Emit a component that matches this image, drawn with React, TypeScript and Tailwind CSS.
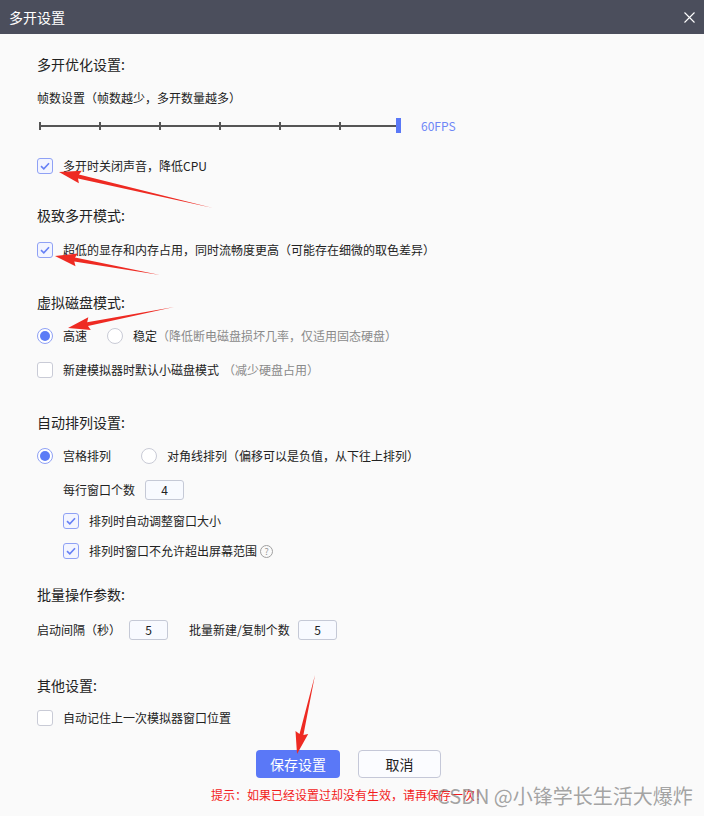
import React from 'react';

const font = "font-['Noto_Sans_CJK_SC','Microsoft_YaHei',sans-serif]";

const Checkbox = ({ checked }: { checked: boolean }) =>
  checked ? (
    <span className="flex h-4 w-4 shrink-0 items-center justify-center rounded-[3px] border border-[#8fa1f5] bg-[#f3f5ff]">
      <svg width="10" height="8" viewBox="0 0 10 8">
        <path d="M1 4.2 L3.8 6.8 L9 1.2" fill="none" stroke="#6680f5" strokeWidth="1.6" />
      </svg>
    </span>
  ) : (
    <span className="block h-4 w-4 shrink-0 rounded-[3px] border border-[#c9cbd6] bg-white" />
  );

const Radio = ({ checked }: { checked: boolean }) =>
  checked ? (
    <span className="flex h-4 w-4 shrink-0 items-center justify-center rounded-full border border-[#8fa1f5] bg-white">
      <span className="block h-[10px] w-[10px] rounded-full bg-[#5c7cf6]" />
    </span>
  ) : (
    <span className="block h-4 w-4 shrink-0 rounded-full border border-[#c9cbd6] bg-white" />
  );

const NumBox = ({ value }: { value: string }) => (
  <span className="flex h-5 w-[39px] shrink-0 items-center justify-center rounded-[3px] border border-[#c5c9d6] bg-[#f8faff] text-xs text-[#222]">
    {value}
  </span>
);

const Header = ({ text, className }: { text: string; className: string }) => (
  <div className={`flex h-5 items-center text-sm text-[#222] ${className}`}>{text}</div>
);

// tapered annotation arrow, tail -> head
const arrow = (tx: number, ty: number, hx: number, hy: number) => {
  const len = Math.hypot(hx - tx, hy - ty);
  const dx = (hx - tx) / len;
  const dy = (hy - ty) / len;
  const px = -dy;
  const py = dx;
  const headLen = 20;
  const bx = hx - dx * headLen;
  const by = hy - dy * headLen;
  const pts = [
    [tx, ty],
    [bx + px * 2, by + py * 2],
    [bx - dx * 2 + px * 6.5, by - dy * 2 + py * 6.5],
    [hx, hy],
    [bx - dx * 2 - px * 6.5, by - dy * 2 - py * 6.5],
    [bx - px * 2, by - py * 2],
  ];
  return pts.map((p) => `${p[0].toFixed(1)},${p[1].toFixed(1)}`).join(' ');
};

const ticks = [0, 60, 120, 180, 240, 300];

export default function App() {
  return (
    <div className={`relative h-[816px] w-[704px] overflow-hidden bg-[#fafafa] ${font}`}>
      {/* title bar */}
      <div className="flex h-[34px] items-center justify-between bg-[#4b4e5c] pl-[9px] pr-[9px]">
        <span className="text-sm text-white">多开设置</span>
        <svg width="11" height="11" viewBox="0 0 11 11">
          <path d="M0.5 0.5 L10.5 10.5 M10.5 0.5 L0.5 10.5" stroke="#fff" strokeWidth="1.1" />
        </svg>
      </div>

      <div className="pl-[37px] text-xs text-[#222]">
        <Header text="多开优化设置:" className="mt-[20px]" />
        <div className="mt-[14px] flex h-5 items-center">帧数设置（帧数越少，多开数量越多）</div>

        {/* slider */}
        <div className="mt-[8px] flex h-5 items-center">
          <div className="relative h-5 w-[364px]">
            <div className="absolute left-[2px] right-[4px] top-[9px] h-[1.5px] bg-[#555]" />
            {ticks.map((t) => (
              <div key={t} className="absolute top-[6px] h-[8px] w-[1.5px] bg-[#555]" style={{ left: 2 + t }} />
            ))}
            <div className="absolute right-0 top-[2px] h-[15px] w-[5px] bg-[#5a78f7]" />
          </div>
          <span className="ml-[20px] text-xs text-[#6e87f7]">60FPS</span>
        </div>

        <div className="mt-[20px] flex h-5 items-center gap-[10px]">
          <Checkbox checked />
          <span>多开时关闭声音，降低CPU</span>
        </div>

        <Header text="极致多开模式:" className="mt-[29px]" />
        <div className="mt-[15px] flex h-5 items-center gap-[10px]">
          <Checkbox checked />
          <span>超低的显存和内存占用，同时流畅度更高（可能存在细微的取色差异）</span>
        </div>

        <Header text="虚拟磁盘模式:" className="mt-[32px]" />
        <div className="mt-[14px] flex h-5 items-center">
          <Radio checked />
          <span className="ml-[10px]">高速</span>
          <span className="ml-[20px] flex">
            <Radio checked={false} />
          </span>
          <span className="ml-[10px]">稳定</span>
          <span className="text-[#8a8a8a]">（降低断电磁盘损坏几率，仅适用固态硬盘）</span>
        </div>
        <div className="mt-[14px] flex h-5 items-center">
          <Checkbox checked={false} />
          <span className="ml-[10px]">新建模拟器时默认小磁盘模式</span>
          <span className="ml-[4px] text-[#8a8a8a]">（减少硬盘占用）</span>
        </div>

        <Header text="自动排列设置:" className="mt-[32px]" />
        <div className="mt-[14px] flex h-5 items-center">
          <Radio checked />
          <span className="ml-[10px]">宫格排列</span>
          <span className="ml-[30px] flex">
            <Radio checked={false} />
          </span>
          <span className="ml-[10px]">对角线排列（偏移可以是负值，从下往上排列）</span>
        </div>
        <div className="pl-[26px]">
          <div className="mt-[14px] flex h-5 items-center">
            <span className="w-[82px]">每行窗口个数</span>
            <NumBox value="4" />
          </div>
          <div className="mt-[11px] flex h-5 items-center gap-[10px]">
            <Checkbox checked />
            <span>排列时自动调整窗口大小</span>
          </div>
          <div className="mt-[10px] flex h-5 items-center gap-[10px]">
            <Checkbox checked />
            <span className="flex items-center">
              排列时窗口不允许超出屏幕范围
              <span className="ml-[3px] flex h-[13px] w-[13px] items-center justify-center rounded-full border border-[#a0a0a0] text-[9px] leading-none text-[#999]">
                ?
              </span>
            </span>
          </div>
        </div>

        <Header text="批量操作参数:" className="mt-[23px]" />
        <div className="mt-[16px] flex h-5 items-center">
          <span className="w-[92px]">启动间隔（秒）</span>
          <NumBox value="5" />
          <span className="ml-[21px] w-[109px]">批量新建/复制个数</span>
          <NumBox value="5" />
        </div>

        <Header text="其他设置:" className="mt-[35px]" />
        <div className="mt-[13px] flex h-5 items-center gap-[10px]">
          <Checkbox checked={false} />
          <span>自动记住上一次模拟器窗口位置</span>
        </div>
      </div>

      {/* buttons */}
      <div className="mt-[22px] flex gap-[18px] pl-[256px]">
        <button className="h-[28px] w-[84px] rounded-[4px] bg-[#5a78f7] text-sm text-white">保存设置</button>
        <button className="h-[28px] w-[83px] rounded-[4px] border border-[#c5c8d8] bg-[#fbfcff] text-sm text-[#222]">
          取消
        </button>
      </div>
      <div className="mt-[9px] flex h-4 items-center pl-[211px] text-xs text-[#f21c1c]">
        提示：如果已经设置过却没有生效，请再保存一次！
      </div>

      {/* watermark */}
      <div className="absolute left-[437px] top-[784px] text-[20px] leading-6 text-[#8c8c8c]/80">
        CSDN @小锋学长生活大爆炸
      </div>

      {/* annotation arrows */}
      <svg className="pointer-events-none absolute inset-0" width="704" height="816" viewBox="0 0 704 816">
        <polygon points={arrow(213, 208, 59, 172)} fill="#ee2a22" />
        <polygon points={arrow(160, 275, 55, 256)} fill="#ee2a22" />
        <polygon points={arrow(174, 307, 68, 328)} fill="#ee2a22" />
        <polygon points={arrow(315, 675, 297, 754)} fill="#ee2a22" />
      </svg>
    </div>
  );
}
